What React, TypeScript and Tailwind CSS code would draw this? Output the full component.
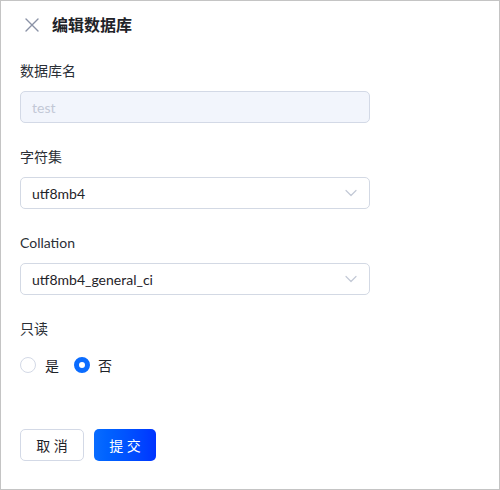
import React from "react";

const font = { fontFamily: 'Lato, "Noto Sans CJK SC", "Noto Sans", sans-serif' };

function Chevron() {
  return (
    <svg width="12" height="8" viewBox="0 0 12 8" fill="none" className="shrink-0">
      <path d="M1 1.5 L6 6.5 L11 1.5" stroke="#c3c9d6" strokeWidth="1.2" strokeLinecap="round" strokeLinejoin="round" />
    </svg>
  );
}

function Label({ children }: { children: React.ReactNode }) {
  return <div className="h-[22px] leading-[22px] text-[14px] text-[#2b2f36] mb-[9px]">{children}</div>;
}

function Select({ value }: { value: string }) {
  return (
    <div className="w-[350px] h-[32px] rounded-[5px] border border-[#d3d9e4] bg-white flex items-center justify-between pl-[11px] pr-[12px] mb-[23px]">
      <span className="text-[14px] text-[#1f2329]">{value}</span>
      <Chevron />
    </div>
  );
}

export default function App() {
  return (
    <div className="w-[500px] h-[490px] border border-[#c4c4c4] bg-white" style={font}>
      <div className="flex items-center h-[24px] mt-[12px] pl-[24px]">
        <svg width="14" height="14" viewBox="0 0 14 14" className="shrink-0">
          <path d="M1 1 L13 13 M13 1 L1 13" stroke="#8a92a6" strokeWidth="1.4" strokeLinecap="round" />
        </svg>
        <span className="ml-[13px] text-[16px] font-bold text-[#1f2329]">编辑数据库</span>
      </div>
      <div className="pl-[19px] pt-[23px]">
        <Label>数据库名</Label>
        <div className="w-[350px] h-[32px] rounded-[5px] border border-[#d3d9e6] bg-[#f2f5fc] flex items-center pl-[11px] mb-[23px]">
          <span className="text-[14px] text-[#c2c8d6]">test</span>
        </div>
        <Label>字符集</Label>
        <Select value="utf8mb4" />
        <Label>Collation</Label>
        <Select value="utf8mb4_general_ci" />
        <Label>只读</Label>
        <div className="h-[32px] flex items-center">
          <span className="w-[16px] h-[16px] rounded-full border border-[#d3d9e6] bg-white" />
          <span className="ml-[9px] text-[14px] text-[#1f2329]">是</span>
          <span className="ml-[15px] w-[16px] h-[16px] rounded-full border-[5px] border-[#0a6cff] bg-white" />
          <span className="ml-[8px] text-[14px] text-[#1f2329]">否</span>
        </div>
        <div className="flex mt-[48px] gap-[10px]">
          <button className="w-[64px] h-[32px] rounded-[5px] border border-[#d3d9e6] bg-white text-[14px] text-[#1f2329]">取&nbsp;消</button>
          <button className="w-[62px] h-[32px] rounded-[5px] bg-gradient-to-r from-[#0a6cff] to-[#0033ff] text-[14px] text-white">提&nbsp;交</button>
        </div>
      </div>
    </div>
  );
}
